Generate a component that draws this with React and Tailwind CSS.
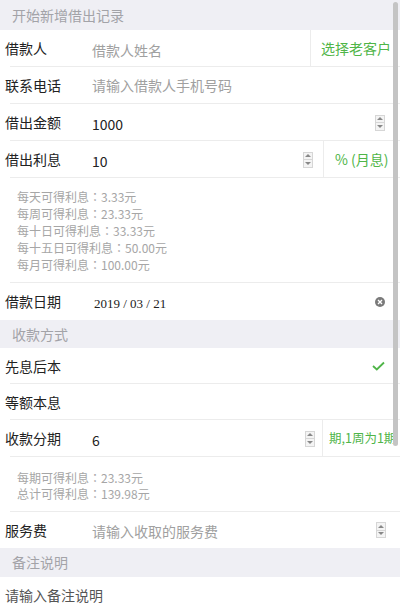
import React from 'react';

const FONT = { fontFamily: '"Noto Sans CJK SC", "Noto Sans", sans-serif' };
const COLON = { fontFamily: '"Noto Sans CJK JP", "Noto Sans CJK SC", sans-serif' };
const GREEN = 'text-[#4fb548]';

const Spinner = () => (
  <div className="flex flex-col w-[10px] h-[16px] border border-[#d6d6d6] bg-[#f4f4f4]">
    <div className="flex-1 flex items-center justify-center border-b border-[#d6d6d6]">
      <div className="w-0 h-0 border-l-[3px] border-r-[3px] border-b-[3px] border-l-transparent border-r-transparent border-b-[#888]" />
    </div>
    <div className="flex-1 flex items-center justify-center">
      <div className="w-0 h-0 border-l-[3px] border-r-[3px] border-t-[3px] border-l-transparent border-r-transparent border-t-[#888]" />
    </div>
  </div>
);

const Header = ({ children, h = 'h-[29px]' }) => (
  <div className={`${h} bg-[#efeff4] flex items-center pl-[12px] text-[14px] text-[#a3a3a8]`}>{children}</div>
);

const Row = ({ label, children, last, h = 'h-[37px]' }) => (
  <div className={`relative ${h} flex items-center bg-white`}>
    <div className="w-[92px] pl-[5px] text-[14px] text-[#222] shrink-0">{label}</div>
    <div className="flex-1 h-full flex items-center min-w-0">{children}</div>
    {!last && <div className="absolute bottom-0 left-[10px] right-0 h-px bg-[#ececec]" />}
  </div>
);

const Placeholder = ({ children }) => <span className="text-[14px] text-[#a0a0a0]">{children}</span>;
const Value = ({ children }) => <span className="text-[14px] text-[#222]">{children}</span>;

const Info = ({ lines, lh = 'leading-[17px]', pad = 'py-[10px]' }) => (
  <div className={`relative bg-white ${pad} pl-[17px]`}>
    {lines.map(([k, v]) => (
      <div key={k} className={`text-[12px] ${lh} text-[#a6a6a6]`}>
        {k}<span style={COLON}>：</span>{v}
      </div>
    ))}
    <div className="absolute bottom-0 left-[10px] right-0 h-px bg-[#ececec]" />
  </div>
);

export default function App() {
  return (
    <div className="relative w-[400px] h-[616px] overflow-hidden bg-white" style={FONT}>
      <Header h="h-[30px]">开始新增借出记录</Header>
      <Row label="借款人">
        <div className="flex-1"><Placeholder>借款人姓名</Placeholder></div>
        <div className="h-full border-l border-[#ececec] w-[90px] flex items-center pl-[10px]">
          <span className={`text-[14px] whitespace-nowrap ${GREEN}`}>选择老客户</span>
        </div>
      </Row>
      <Row label="联系电话">
        <Placeholder>请输入借款人手机号码</Placeholder>
      </Row>
      <Row label="借出金额">
        <div className="flex-1"><Value>1000</Value></div>
        <div className="pr-[15px]"><Spinner /></div>
      </Row>
      <Row label="借出利息">
        <div className="flex-1"><Value>10</Value></div>
        <div className="pr-[10px]"><Spinner /></div>
        <div className="h-full border-l border-[#ececec] w-[77px] flex items-center pl-[11px]">
          <span className={`text-[14px] whitespace-nowrap ${GREEN}`}>% (月息)</span>
        </div>
      </Row>
      <Info
        lines={[
          ['每天可得利息', '3.33元'],
          ['每周可得利息', '23.33元'],
          ['每十日可得利息', '33.33元'],
          ['每十五日可得利息', '50.00元'],
          ['每月可得利息', '100.00元'],
        ]}
      />
      <Row label="借款日期" last>
        <div className="flex-1 pl-[2px]">
          <span className="text-[13px] text-[#222]" style={{ fontFamily: '"Liberation Serif", serif' }}>2019 / 03 / 21</span>
        </div>
        <div className="pr-[15px]">
          <div className="w-[10px] h-[10px] rounded-full bg-[#7a7a7a] flex items-center justify-center">
            <svg width="6" height="6" viewBox="0 0 6 6">
              <path d="M1 1L5 5M5 1L1 5" stroke="white" strokeWidth="1.4" />
            </svg>
          </div>
        </div>
      </Row>
      <Header h="h-[28px]">收款方式</Header>
      <Row label="先息后本" h="h-[36px]">
        <div className="flex-1" />
        <div className="pr-[15px]">
          <svg width="13" height="10" viewBox="0 0 13 10">
            <path d="M1 5L4.8 8.5L12 1.5" fill="none" stroke="#4fb548" strokeWidth="1.8" />
          </svg>
        </div>
      </Row>
      <Row label="等额本息" h="h-[36px]" />
      <Row label="收款分期">
        <div className="flex-1"><Value>6</Value></div>
        <div className="pr-[7px]"><Spinner /></div>
        <div className="h-full border-l border-[#ececec] w-[78px] flex items-center pl-[6px] overflow-hidden">
          <span className={`text-[12.5px] whitespace-nowrap ${GREEN}`}>期,1周为1期</span>
        </div>
      </Row>
      <Info lines={[['每期可得利息', '23.33元'], ['总计可得利息', '139.98元']]} lh="leading-[16px]" pad="pt-[13px] pb-[10px]" />
      <Row label="服务费" last h="h-[36px]">
        <div className="flex-1"><Placeholder>请输入收取的服务费</Placeholder></div>
        <div className="pr-[14px]"><Spinner /></div>
      </Row>
      <Header>备注说明</Header>
      <div className="pl-[5px] pt-[8px] text-[14px] text-[#555]">请输入备注说明</div>
      <div className="absolute top-[2px] right-[2px] w-[5px] h-[444px] rounded-full bg-[#c4c4c4]" />
    </div>
  );
}
